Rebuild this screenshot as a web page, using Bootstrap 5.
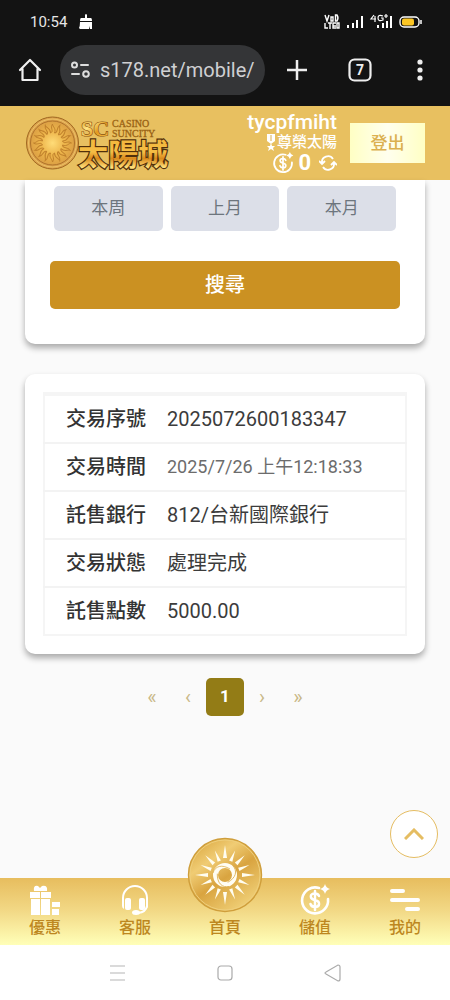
<!DOCTYPE html>
<html lang="zh-Hant">
<head>
<meta charset="utf-8">
<meta name="viewport" content="width=device-width, initial-scale=1">
<title>太陽城</title>
<link href="https://cdn.jsdelivr.net/npm/bootstrap@5.3.0/dist/css/bootstrap.min.css" rel="stylesheet">
<style>
  body { font-family: Roboto, "Noto Sans CJK TC", sans-serif; background: #fafafa; color: #333; }
  svg { display: block; flex: none; }
  button { line-height: 1; }
  .bare { background: none; border: 0; padding: 0; }
  .device { background: #131313; color: #e6e6e6; }
  .status-row { height: 44px; padding: 0 28px 0 30px; font-size: 15px; }
  .browser-row { height: 62px; padding: 0 23px 10px 18px; }
  .address { height: 50px; background: #343537; border-radius: 25px; margin-left: 18px; padding: 0 8px 0 10px; gap: 9px; min-width: 0; }
  .address input { background: none; border: 0; color: #cfd0d2; font-size: 20px; padding: 0; outline: 0; min-width: 0; width: 100%; }
  .browser-tools { gap: 41px; margin-left: 22px; }
  .site-head { height: 74px; background: #e8c060; padding: 0 25px; color: #fff; }
  .member { font-size: 15px; line-height: 20px; margin-right: 13px; }
  .member-name { font-size: 21px; font-weight: 500; }
  .balance { font-size: 22px; font-weight: 700; }
  .logout { width: 75px; height: 40px; font-size: 17px; font-weight: 500; color: #dbb050; background: linear-gradient(90deg, #ffffc4, #ffffee 50%, #ffffc4); }
  .panel { background: #fff; border-radius: 10px; margin: 0 25px; box-shadow: 0 4px 6px rgba(0,0,0,.32); }
  .panel-search { border-radius: 0 0 10px 10px; padding: 6px 25px 35px; }
  .periods { gap: 8px; padding: 0 4px; margin-bottom: 30px; }
  .period { height: 45px; background: #dcdfe8; color: #6d757d; border-radius: 5px; font-size: 17px; }
  .search { height: 48px; background: #cb9122; color: #fff; border-radius: 5px; font-size: 20px; font-weight: 500; }
  .panel-record { margin-top: 30px; padding: 18px; }
  .record { border: 2px solid #f5f5f5; border-top-width: 4px; font-size: 20px; line-height: 24px; width: 100%; }
  .record tr + tr { border-top: 2px solid #f3f3f3; }
  .record th { width: 123px; padding: 11px 0 11px 21px; font-weight: 500; white-space: nowrap; }
  .record td { padding: 11px 0; color: #3c3c3c; }
  .record .when { font-size: 18px; color: #6c6c6c; }
  .pages { margin: 24px 0 0; font-size: 20px; }
  .pages a { width: 36px; height: 38px; color: #c9b887; text-decoration: none; }
  .pages .now { width: 38px; background: #937c16; color: #fff; border-radius: 5px; font-size: 17px; font-weight: 700; }
  .to-top { width: 48px; height: 48px; border: 1px solid #e5bd62; border-radius: 50%; background: #fff; margin: 0 12px 20px; }
  .tabs { height: 67px; background: linear-gradient(#e7bd5e, #f2d885 48%, #ffffb8); }
  .tabs a { flex: 1 1 0; color: #bd871f; text-decoration: none; font-size: 16px; line-height: 20px; font-weight: 500; padding-bottom: 7px; gap: 2px; }
  .medal { left: 50%; top: -41px; margin-left: -38px; }
  .system { height: 55px; background: #fff; gap: 91px; }
</style>
</head>
<body>
<svg width="0" height="0" class="position-absolute" aria-hidden="true">
  <defs>
    <linearGradient id="gold" x1="0" y1="0" x2="1" y2="1"><stop offset="0" stop-color="#d18a12"/><stop offset=".35" stop-color="#ffe583"/><stop offset=".6" stop-color="#e29a20"/><stop offset="1" stop-color="#f8c950"/></linearGradient>
    <linearGradient id="sheen" x1="0" y1="0" x2="0" y2="1"><stop offset=".2" stop-color="#f3b73c"/><stop offset=".5" stop-color="#f5bd45"/><stop offset=".65" stop-color="#d98a1c"/><stop offset=".85" stop-color="#ffe07a"/></linearGradient>
    <linearGradient id="brown" x1="0" y1="0" x2="1" y2="1"><stop offset="0" stop-color="#a86d16"/><stop offset="1" stop-color="#85500e"/></linearGradient>
    <radialGradient id="glow"><stop offset="0" stop-color="#ffdc78"/><stop offset=".55" stop-color="#edb54b"/><stop offset="1" stop-color="#dca044"/></radialGradient>
    <linearGradient id="disc" x1=".1" y1="0" x2=".8" y2="1"><stop offset="0" stop-color="#d9a53c"/><stop offset=".3" stop-color="#f0cc74"/><stop offset=".55" stop-color="#d9a440"/><stop offset="1" stop-color="#f3d67f"/></linearGradient>
    <g id="rays4"><path id="ray" d="M-2-17L0-30L2-17Z"/><use href="#ray" transform="rotate(90)"/><use href="#ray" transform="rotate(180)"/><use href="#ray" transform="rotate(270)"/></g>
    <g id="flames4" fill="none"><path id="flame" d="M-2-10C2-12-3-15 0-19C0-16 4-15 2-10"/><use href="#flame" transform="rotate(90)"/><use href="#flame" transform="rotate(180)"/><use href="#flame" transform="rotate(270)"/></g>
    <symbol id="coin" viewBox="0 0 32 32"><path d="M20 4A13 13 0 1 0 29 15" fill="none" stroke="currentColor" stroke-width="2.6" stroke-linecap="round"/><path d="M26 0Q27 4 31 5Q27 6 26 10Q25 6 21 5Q25 4 26 0Z" fill="currentColor"/><path d="M20 12Q19 9.500 16 9.500C10 9.500 11 15 15.500 16C22 17 21 23 16 23Q12.500 23 11.500 20M16 7V26" fill="none" stroke="currentColor" stroke-width="2.500" stroke-linecap="round"/></symbol>
  </defs>
</svg>
<div class="d-flex flex-column min-vh-100">
  <div class="device">
    <div class="status-row d-flex align-items-center justify-content-between">
      <div class="d-flex align-items-center gap-2"><span>10:54</span>
        <svg class="ms-1" width="14" height="16" viewBox="0 0 14 16" fill="#fff"><path d="M6 1Q7-1 8 1V4H12Q13 4 13 7H1Q1 4 2 4H6ZM1 8H13V15H11L10 12V15H1L0 14Q1 12 1 8Z"/></svg>
      </div>
      <svg width="98" height="16" viewBox="0 0 98 16" role="img" aria-label="VoLTE 4G+">
        <g fill="none" stroke="#fff" stroke-width="1.400"><path d="M1 1L3 7L5 1M7 3H9V7H7ZM11.500 1V7H13Q15 4 13 1ZM1 9V14H4M4 9H8M6 9V15M12 9H9V14H12M9 12H12M13 9V14H15V9Z"/></g>
        <g fill="#fff"><path d="M23 11h2v3h-2zM28 9h2v5h-2zM32 6h2v8h-2zM37 2h2v12h-2zM53 11h2v3h-2zM58 9h2v5h-2zM62 7h2v7h-2zM66 2h2v12h-2z"/></g>
        <path d="M50 1L47 5H52M51 2V8M59 2Q54 0 54 4Q54 8 59 6V4H57M62 0V4M60 2H64" fill="none" stroke="#fff" stroke-width="1.200"/>
        <rect x="76" y="3" width="19" height="10" rx="4" fill="none" stroke="#fff" stroke-width="1.400"/><path d="M97 6V10" stroke="#fff" stroke-width="1.500"/><rect x="78" y="4.500" width="12" height="7" rx="2" fill="#fcc624"/>
      </svg>
    </div>
    <div class="browser-row d-flex align-items-center">
      <button class="bare" aria-label="Home"><svg width="24" height="24" viewBox="0 0 24 24" fill="none" stroke="#f0f0f0" stroke-width="2.200" stroke-linejoin="round" stroke-linecap="round"><path d="M2 12L12 2L22 12M4.500 11V22H19.500V11"/></svg></button>
      <div class="address d-flex align-items-center flex-grow-1">
        <svg width="21" height="18" viewBox="0 0 21 18" fill="none" stroke="#dedede" stroke-width="2" stroke-linecap="round"><circle cx="4.500" cy="4" r="2.500"/><path d="M11 4H18M2 13H9"/><circle cx="16" cy="13" r="2.800"/></svg>
        <input type="text" value="s178.net/mobile/" aria-label="Address">
      </div>
      <div class="browser-tools d-flex align-items-center">
        <button class="bare" aria-label="New tab"><svg width="20" height="20" viewBox="0 0 20 20" stroke="#eee" stroke-width="2.500"><path d="M10 0V20M0 10H20"/></svg></button>
        <button class="bare" aria-label="Tabs"><svg width="24" height="24" viewBox="0 0 24 24"><rect x="1.500" y="1.500" width="21" height="21" rx="5" fill="none" stroke="#eee" stroke-width="2.200"/><text x="12" y="17" text-anchor="middle" font-size="14" font-weight="700" fill="#eee">7</text></svg></button>
        <button class="bare" aria-label="Menu"><svg width="14" height="22" viewBox="0 0 14 22" fill="#eee"><circle cx="7" cy="3" r="2.600"/><circle cx="7" cy="11" r="2.600"/><circle cx="7" cy="19" r="2.600"/></svg></button>
      </div>
    </div>
  </div>

  <header class="site-head d-flex align-items-center">
    <svg width="150" height="74" viewBox="0 -7 150 74" role="img" aria-label="太陽城 SC Casino Suncity">
      <circle cx="27.500" cy="30" r="26" fill="#dca24b" stroke="#a06822" stroke-width="1"/><circle cx="27.500" cy="30" r="22" fill="url(#glow)" stroke="#ae722b" stroke-width="1"/><circle cx="27.500" cy="30" r="24" fill="none" stroke="#ecc268" stroke-width="1"/>
      <g transform="translate(27.500 30)" stroke="#c1822d" stroke-width="1"><use href="#flames4"/><use href="#flames4" transform="rotate(22.500)"/><use href="#flames4" transform="rotate(45)"/><use href="#flames4" transform="rotate(67.500)"/></g>
      <text x="56" y="23" font-family="Liberation Serif, serif" font-size="22" font-weight="700" fill="url(#gold)" stroke="#8a5210" stroke-width="1.200" paint-order="stroke">SC</text>
      <g font-family="Liberation Serif, serif" font-size="10" fill="url(#brown)" stroke="#9b6415" stroke-width=".3"><text x="87" y="14">CASINO</text><text x="87" y="24">SUNCITY</text></g>
      <text x="53" y="52" font-family="Noto Sans CJK TC, sans-serif" font-size="30" font-weight="700" fill="url(#sheen)" stroke="#50300b" stroke-width="2.400" paint-order="stroke">太陽城</text>
    </svg>
    <div class="member ms-auto text-end">
      <div class="member-name">tycpfmiht</div>
      <div class="d-flex align-items-center justify-content-end"><svg width="12" height="18" viewBox="0 0 12 18" fill="#fff"><path d="M2 1H10V8L6 11L2 8ZM6 10L7 13L10 13L8 15L9 18L6 16L3 18L4 15L2 13L5 13Z"/><path d="M6 2V8" stroke="#dbae51"/></svg><span class="fw-medium">尊榮太陽</span></div>
      <div class="d-flex align-items-center justify-content-end gap-1"><svg width="22" height="22"><use href="#coin"/></svg><span class="balance">0</span>
        <button class="bare ms-1" aria-label="重新整理"><svg width="18" height="16" viewBox="0 0 18 16" fill="none" stroke="#fff" stroke-width="1.800"><path d="M14 4A6 6 0 0 0 3 8M0 6L3 9L6 6M4 12A6 6 0 0 0 15 8M12 10L15 7L18 10"/></svg></button></div>
    </div>
    <button class="logout bare">登出</button>
  </header>

  <main class="d-flex flex-column flex-grow-1">
    <section class="panel panel-search">
      <div class="periods d-flex">
        <button class="period border-0 flex-fill">本周</button>
        <button class="period border-0 flex-fill">上月</button>
        <button class="period border-0 flex-fill">本月</button>
      </div>
      <button class="search border-0 w-100">搜尋</button>
    </section>
    <section class="panel panel-record">
      <table class="record">
        <tr><th scope="row">交易序號</th><td>2025072600183347</td></tr>
        <tr><th scope="row">交易時間</th><td class="when">2025/7/26 上午12:18:33</td></tr>
        <tr><th scope="row">託售銀行</th><td>812/台新國際銀行</td></tr>
        <tr><th scope="row">交易狀態</th><td>處理完成</td></tr>
        <tr><th scope="row">託售點數</th><td>5000.00</td></tr>
      </table>
    </section>
    <nav class="pages d-flex justify-content-center" aria-label="分頁">
      <a href="#" class="d-flex align-items-center justify-content-center">«</a>
      <a href="#" class="d-flex align-items-center justify-content-center">‹</a>
      <a href="#" class="now d-flex align-items-center justify-content-center">1</a>
      <a href="#" class="d-flex align-items-center justify-content-center">›</a>
      <a href="#" class="d-flex align-items-center justify-content-center">»</a>
    </nav>
    <button class="to-top mt-auto align-self-end d-flex align-items-center justify-content-center p-0" aria-label="回到頂端"><svg width="20" height="12" viewBox="0 0 20 12" fill="none" stroke="#e5bd62" stroke-width="3"><path d="M1 11L10 2L19 11"/></svg></button>
  </main>

  <nav class="tabs d-flex position-relative">
    <a href="#" class="d-flex flex-column align-items-center justify-content-end"><svg width="32" height="32" viewBox="0 0 32 32" fill="#fff"><path d="M1 8H11V14H1ZM12 8H22V14H12ZM2 15H11V31H2ZM12 15H21V31H12ZM23 18H31V23H23ZM23 25H30V31H23ZM5 7Q4 1 9 2L11 4L13 2Q19 1 18 7Z"/></svg>優惠</a>
    <a href="#" class="d-flex flex-column align-items-center justify-content-end"><svg width="28" height="32" viewBox="0 0 28 32"><path d="M2 21V14A12 12 0 0 1 26 14V22Q25 28 17 29" fill="none" stroke="#fff" stroke-width="2"/><path d="M1 16Q1 15 3 15V25Q1 24 1 22ZM27 16Q27 15 25 15V25Q27 24 27 22Z" fill="#fff"/><rect x="4" y="14" width="6" height="12" rx="2" fill="#fff"/><rect x="18" y="14" width="6" height="12" rx="2" fill="#fff"/><ellipse cx="15" cy="28.500" rx="4" ry="2.500" fill="#fff"/></svg>客服</a>
    <a href="#" class="d-flex flex-column align-items-center justify-content-end">
      <svg class="medal position-absolute" width="76" height="76" viewBox="-38 -38 76 76"><circle r="36.500" fill="url(#disc)" stroke="#cf9e3b" stroke-width="1.400"/><circle r="35" fill="none" stroke="#efcf7c" stroke-width="1"/>
        <g fill="#fffdf0"><use href="#rays4"/><use href="#rays4" transform="rotate(22.500) scale(.88)"/><use href="#rays4" transform="rotate(45) scale(.93)"/><use href="#rays4" transform="rotate(67.500) scale(.88)"/></g>
        <circle r="9.500" fill="none" stroke="#fffdf4" stroke-width="5"/><g fill="none" stroke="#ddb052" stroke-width=".8"><path id="swirl" d="M-12-2C-10-9-3-11 5-6"/><use href="#swirl" transform="rotate(120)"/><use href="#swirl" transform="rotate(240)"/></g></svg>首頁</a>
    <a href="#" class="d-flex flex-column align-items-center justify-content-end"><svg width="32" height="32" class="text-white"><use href="#coin"/></svg>儲值</a>
    <a href="#" class="d-flex flex-column align-items-center justify-content-end"><svg width="32" height="32" viewBox="0 0 32 32" stroke="#fff" stroke-width="4" stroke-linecap="round"><path d="M3 7H14M3 16H29M18 25H29"/></svg>我的</a>
  </nav>
  <div class="system d-flex align-items-center justify-content-center">
    <button class="bare" aria-label="Recent"><svg width="17" height="16" viewBox="0 0 17 16" stroke="#b5b5b5" stroke-width="1.200"><path d="M1 1H16M1 8H16M1 15H16"/></svg></button>
    <button class="bare" aria-label="Home screen"><svg width="16" height="16" viewBox="0 0 16 16"><rect x="1" y="1" width="14" height="14" rx="3" fill="none" stroke="#aaa" stroke-width="1.200"/></svg></button>
    <button class="bare" aria-label="Back"><svg width="17" height="18" viewBox="0 0 17 18"><path d="M2 8L14 1Q16 1 16 3V15Q16 17 14 17L2 10Q0 9 2 8Z" fill="none" stroke="#aaa" stroke-width="1.200"/></svg></button>
  </div>
</div>
<script src="https://cdn.jsdelivr.net/npm/bootstrap@5.3.0/dist/js/bootstrap.bundle.min.js"></script>
</body>
</html>
